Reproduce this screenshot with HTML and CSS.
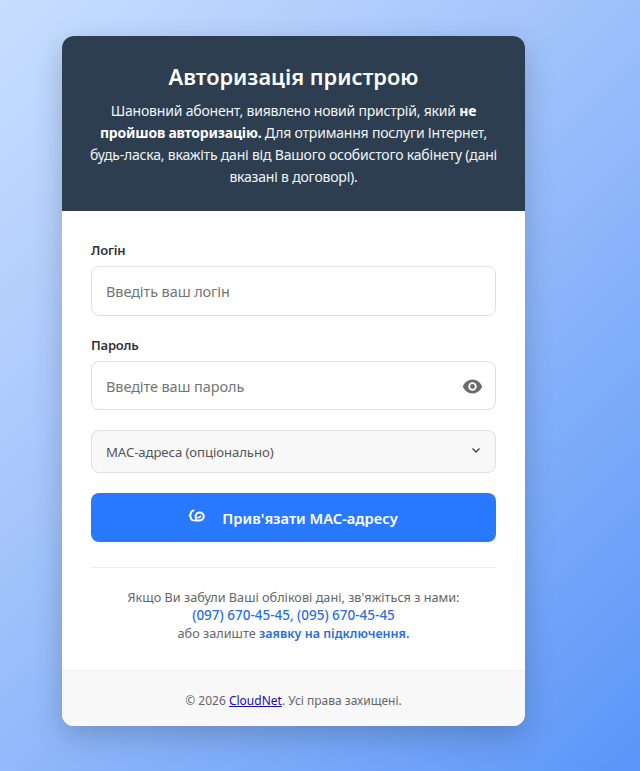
FILE: index.html
```html
<!DOCTYPE html>
<html lang="uk">
<head>
<meta charset="utf-8">
<title>Авторизація пристрою</title>
<link rel="stylesheet" href="styles.css">
</head>
<body>
<main class="card">
  <header class="head">
    <h1>Авторизація пристрою</h1>
    <p>Шановний абонент, виявлено новий пристрій, який <strong>не пройшов авторизацію.</strong> Для отримання послуги Інтернет, будь-ласка, вкажіть дані від Вашого особистого кабінету (дані вказані в договорі).</p>
  </header>
  <form class="form">
    <label class="label" for="login">Логін</label>
    <div class="field"><input id="login" class="input" type="text" placeholder="Введіть ваш логін"></div>
    <label class="label" for="pass">Пароль</label>
    <div class="field">
      <input id="pass" class="input" type="password" placeholder="Введіте ваш пароль">
      <svg class="eye" viewBox="0 0 24 24" width="21" height="21"><path fill="#6b6b6b" d="M12 4C7 4 2.700 7.300 1 12c1.700 4.700 6 8 11 8s9.300-3.300 11-8c-1.700-4.700-6-8-11-8zM12 16.800a4.800 4.800 0 1 1 0-9.600 4.800 4.800 0 0 1 0 9.600zm0-7.600a2.800 2.800 0 1 0 0 5.600 2.800 2.800 0 0 0 0-5.600z"/></svg>
    </div>
    <div class="select">
      <span>MAC-адреса (опціонально)</span>
      <svg class="chev" viewBox="0 0 12 12" width="12" height="12"><path d="M2.500 4.500 6 8l3.500-3.500" fill="none" stroke="#444" stroke-width="1.400"/></svg>
    </div>
    <button class="btn" type="button">
      <svg class="link" viewBox="0 0 18 18" width="18" height="18"><path d="M5.500 2.500C3.500 3 2.800 4 2.800 5.500c0 1-.8 1.500-1.200 2 .4.600 1.200 1 1.200 2 0 1.400.8 2.400 2.400 2.800" fill="none" stroke="#fff" stroke-width="1.900" stroke-linecap="round"/><path d="M8.200 10.700C6.800 8.600 7.800 4.800 11 4.500c2.700-.2 4.800 1.500 4.800 3.800 0 2.500-2.200 4.300-5.300 4.300H7" fill="none" stroke="#fff" stroke-width="2" stroke-linecap="round"/><path d="M10 9.300c1 .5 2.200 0 2.500-1" fill="none" stroke="#fff" stroke-width="1.600" stroke-linecap="round"/></svg>
      <span>Прив'язати MAC-адресу</span>
    </button>
    <div class="contact">
      Якщо Ви забули Ваші облікові дані, зв'яжіться з нами:<br>
      <a class="tel" href="#">(097) 670-45-45</a><span class="tel">,</span> <a class="tel" href="#">(095) 670-45-45</a><br>
      або залиште <a class="req" href="#">заявку на підключення.</a>
    </div>
  </form>
  <footer class="foot">© 2026 <a href="#">CloudNet</a>. Усі права захищені.</footer>
</main>
</body>
</html>
```
FILE: styles.css
```css
* { box-sizing: border-box; }
html, body { height: 100%; }
body {
  margin: 0;
  padding: 36px 0 0 62px;
  overflow: hidden;
  font-family: "Noto Sans", "Open Sans", sans-serif;
  background: linear-gradient(135deg, #c8deff 0%, #a3c4fb 40%, #5a96f8 100%);
  color: #333;
}
.card {
  width: 463px;
  background: #fff;
  border-radius: 12px;
  overflow: hidden;
  box-shadow: 0 10px 30px rgba(0, 0, 0, .2);
}
.head {
  height: 175px;
  padding: 24px 20px 0;
  background: #2c3e50;
  color: #f2f4f6;
  text-align: center;
}
.head h1 {
  margin: 0 0 7px;
  font-size: 21.800px;
  line-height: 33px;
  font-weight: 600;
  color: #fff;
}
.head p {
  margin: 0;
  font-size: 14px;
  line-height: 22px;
  letter-spacing: -.2px;
}
.head strong { color: #fff; font-weight: 700; }
.form { padding: 29px 29px 0; height: 459px; }
.label {
  display: block;
  margin-bottom: 6px;
  font-size: 13px;
  line-height: 20px;
  font-weight: 600;
  letter-spacing: -.2px;
  color: #333;
}
.field { position: relative; margin-bottom: 19px; }
.input {
  display: block;
  width: 100%;
  height: 49.500px;
  padding: 1px 14px 0;
  border: 1px solid #e0e0e0;
  border-radius: 8px;
  font: 14.500px "Noto Sans", sans-serif;
  letter-spacing: -.1px;
  background: #fff;
  outline: 0;
}
.input::placeholder { color: #757575; opacity: 1; }
.eye { position: absolute; right: 13px; top: 15px; }
.select {
  display: flex;
  align-items: center;
  justify-content: space-between;
  height: 43px;
  padding: 0 14px;
  margin-top: 20px;
  border: 1px solid #e0e0e0;
  border-radius: 8px;
  background: #f8f8f8;
  font-size: 13.200px;
  letter-spacing: -.1px;
  color: #555;
}
.chev { position: relative; top: -2px; margin-right: -1px; }
.btn {
  display: flex;
  align-items: center;
  justify-content: center;
  gap: 15px;
  width: 100%;
  height: 49px;
  margin-top: 20px;
  border: 0;
  border-radius: 8px;
  background: #2979ff;
  color: #fff;
  font: 600 14.700px "Noto Sans", sans-serif;
}
.link { position: relative; top: -1px; left: -1px; }
.contact {
  margin-top: 24.500px;
  padding-top: 20px;
  border-top: 1px solid #eee;
  text-align: center;
  font-size: 12.700px;
  line-height: 18.400px;
  color: #666;
}
.tel { color: #2a6fdb; font-size: 13.500px; text-decoration: none; font-weight: 500; }
.req { color: #2a6fdb; font-size: 12.500px; font-weight: 600; text-decoration: none; }
.foot {
  height: 56px;
  padding-top: 3px;
  display: flex;
  align-items: center;
  justify-content: center;
  white-space: pre;
  background: #f8f8f8;
  border-top: 1px solid #f0f0f0;
  font-size: 12px;
  color: #666;
}
.foot a { color: #1a0dab; text-decoration: underline; }
```
